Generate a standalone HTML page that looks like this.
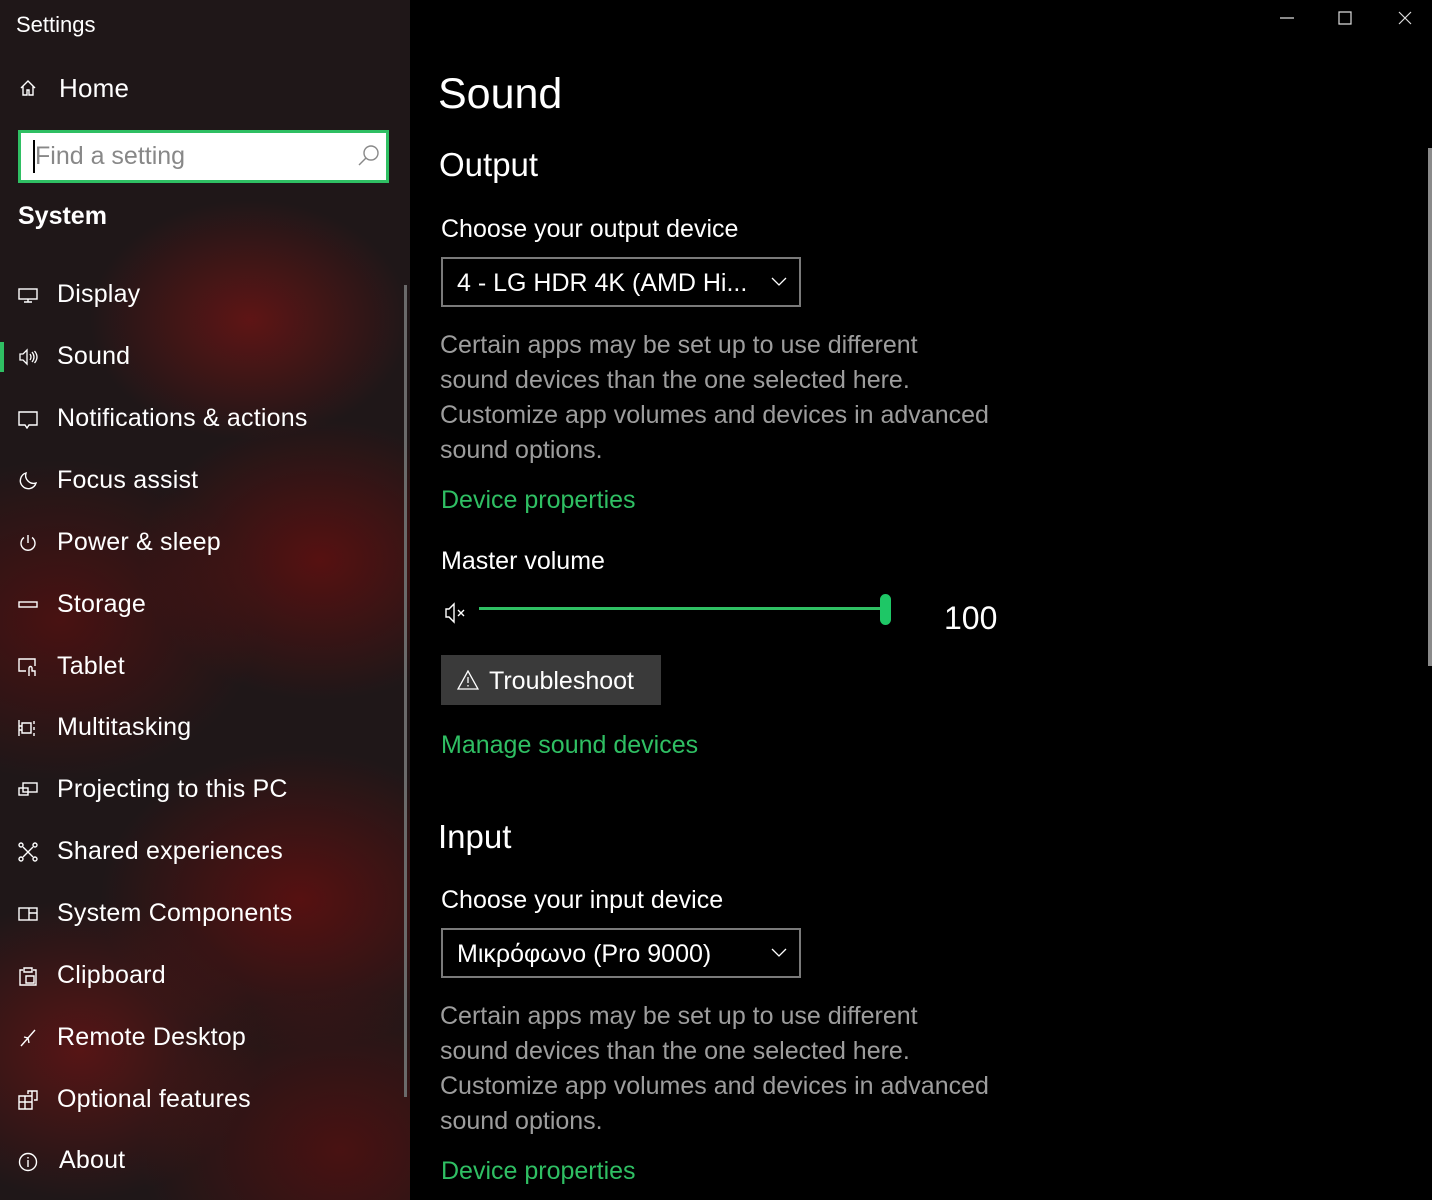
<!DOCTYPE html>
<html><head><meta charset="utf-8"><style>
*{margin:0;padding:0;box-sizing:border-box}
body{width:1432px;height:1200px;background:#000;font-family:"Liberation Sans","DejaVu Sans",sans-serif;color:#fff;position:relative;overflow:hidden}
.side{position:absolute;left:0;top:0;width:410px;height:1200px;background:
radial-gradient(ellipse 160px 120px at 250px 320px,rgba(110,20,20,.8),transparent),
radial-gradient(ellipse 180px 140px at 320px 560px,rgba(100,15,15,.8),transparent),
radial-gradient(ellipse 200px 160px at 60px 620px,rgba(90,15,15,.7),transparent),
radial-gradient(ellipse 200px 150px at 300px 900px,rgba(100,15,15,.8),transparent),
radial-gradient(ellipse 180px 150px at 80px 1050px,rgba(110,20,20,.7),transparent),
radial-gradient(ellipse 200px 160px at 340px 1150px,rgba(90,15,15,.7),transparent),
#1f1718}
.t{position:absolute;white-space:nowrap}
.nav{position:absolute;left:57px;font-size:25px;color:#fff;white-space:nowrap;letter-spacing:.2px}
.ic{position:absolute;left:18px;width:20px;height:20px}
.p{position:absolute;left:440px;font-size:25px;color:#9d9d9d;line-height:35px;white-space:nowrap}
.g{position:absolute;left:441px;font-size:25px;color:#2fbf63}
.dd{position:absolute;left:441px;width:360px;height:50px;border:2px solid #7a7a7a;font-size:25px;padding:10px 14px}
</style></head><body>
<div class="side">
<div class="t" style="left:16px;top:12px;font-size:22px">Settings</div>
<svg class="ic" style="top:78px" viewBox="0 0 20 20" fill="none" stroke="#fff" stroke-width="1.4"><path d="M3 10L10 3l7 7M5 8v9h4v-5h2v5h4V8"/></svg>
<div class="nav" style="left:59px;top:73px;font-size:26px">Home</div>
<div style="position:absolute;left:18px;top:130px;width:371px;height:53px;border:3px solid #2fbf63;background:#fff"></div>
<div class="t" style="left:35px;top:142px;font-size:25px;color:#888">Find a setting</div>
<div style="position:absolute;left:33px;top:140px;width:2px;height:33px;background:#000"></div>
<svg style="position:absolute;left:356px;top:143px" width="26" height="26" viewBox="0 0 26 26" fill="none" stroke="#888" stroke-width="1.4"><circle cx="15" cy="10" r="7"/><path d="M10 15L3 22"/></svg>
<div class="t" style="left:18px;top:202px;font-size:25px;font-weight:bold">System</div>
<div style="position:absolute;left:0;top:342px;width:4px;height:30px;background:#2fbf63"></div>
<div style="position:absolute;left:404px;top:285px;width:3px;height:812px;background:#6a6a6a"></div>
<svg class="ic" style="top:285px" viewBox="0 0 20 20" fill="none" stroke="#fff" stroke-width="1.4"><rect x="1" y="4" width="18" height="10"/><path d="M10 14v3M6 17h8"/></svg>
<div class="nav" style="top:280px">Display</div>
<svg class="ic" style="top:347px" viewBox="0 0 20 20" fill="none" stroke="#fff" stroke-width="1.3"><path d="M2 7h3l4-4v14l-4-4H2zM12 7q2 3 0 6M14 5q4 5 0 10M16.5 4q5 6 0 12"/></svg>
<div class="nav" style="top:342px">Sound</div>
<svg class="ic" style="top:409px" viewBox="0 0 20 20" fill="none" stroke="#fff" stroke-width="1.4"><path d="M1 3h18v13h-8l-2 3-2-3H1z"/></svg>
<div class="nav" style="top:404px">Notifications &amp; actions</div>
<svg class="ic" style="top:471px" viewBox="0 0 20 20" fill="none" stroke="#fff" stroke-width="1.4"><path d="M8 2a8 8 0 1 0 10 10A8 8 0 0 1 8 2z"/></svg>
<div class="nav" style="top:466px">Focus assist</div>
<svg class="ic" style="top:533px" viewBox="0 0 20 20" fill="none" stroke="#fff" stroke-width="1.4"><path d="M10 2v8M6 4.5a7 7 0 1 0 8 0"/></svg>
<div class="nav" style="top:528px">Power &amp; sleep</div>
<svg class="ic" style="top:595px" viewBox="0 0 20 20" fill="none" stroke="#fff" stroke-width="1.4"><rect x="1" y="7" width="18" height="5"/></svg>
<div class="nav" style="top:590px">Storage</div>
<svg class="ic" style="top:657px" viewBox="0 0 20 20" fill="none" stroke="#fff" stroke-width="1.4"><path d="M8 14H1V2h16v7M11 19v-8a1.5 1.5 0 0 1 3 0v3h3v5"/></svg>
<div class="nav" style="top:652px">Tablet</div>
<svg class="ic" style="top:718px" viewBox="0 0 20 20" fill="none" stroke="#fff" stroke-width="1.4"><path d="M1 2v16M4 5h9v10H4zM16 3v3M16 9v3M16 15v3M1 8h3M1 12h3"/></svg>
<div class="nav" style="top:713px">Multitasking</div>
<svg class="ic" style="top:780px" viewBox="0 0 20 20" fill="none" stroke="#fff" stroke-width="1.4"><rect x="5" y="3" width="14" height="9"/><rect x="1" y="8" width="9" height="7"/></svg>
<div class="nav" style="top:775px">Projecting to this PC</div>
<svg class="ic" style="top:842px" viewBox="0 0 20 20" fill="none" stroke="#fff" stroke-width="1.4"><circle cx="3" cy="3" r="2"/><circle cx="17" cy="3" r="2"/><circle cx="3" cy="17" r="2"/><circle cx="17" cy="17" r="2"/><path d="M5 5l10 10M15 5L5 15"/></svg>
<div class="nav" style="top:837px">Shared experiences</div>
<svg class="ic" style="top:904px" viewBox="0 0 20 20" fill="none" stroke="#fff" stroke-width="1.4"><rect x="1" y="4" width="18" height="12"/><path d="M11 4v12M11 9h8"/></svg>
<div class="nav" style="top:899px">System Components</div>
<svg class="ic" style="top:966px" viewBox="0 0 20 20" fill="none" stroke="#fff" stroke-width="1.4"><path d="M5 4H2v15h16V4h-3M6 2h8v4H6zM8 10h8v7H8z"/></svg>
<div class="nav" style="top:961px">Clipboard</div>
<svg class="ic" style="top:1028px" viewBox="0 0 20 20" fill="none" stroke="#fff" stroke-width="1.4"><path d="M17 2L10 10M3 18l7-8M6 9l4 1M11 15l-1-5"/></svg>
<div class="nav" style="top:1023px">Remote Desktop</div>
<svg class="ic" style="top:1090px" viewBox="0 0 20 20" fill="none" stroke="#fff" stroke-width="1.4"><path d="M1 6h13v13H1zM1 12h13M7 6v13M10 4V1h9v9h-3M14 1v9"/></svg>
<div class="nav" style="top:1085px">Optional features</div>
<svg class="ic" style="top:1152px" viewBox="0 0 20 20" fill="none" stroke="#fff" stroke-width="1.4"><circle cx="10" cy="10" r="8.5"/><path d="M10 8v7M10 5v1.5"/></svg>
<div class="nav" style="top:1146px;left:59px">About</div>
</div>
<svg style="position:absolute;left:1278px;top:10px" width="140" height="16" fill="none" stroke="#ddd" stroke-width="1.2"><path d="M2 8h14M61 2h12v12H61zM121 2l12 12M133 2l-12 12"/></svg>
<div style="position:absolute;left:1428px;top:148px;width:4px;height:518px;background:#8a8a8a"></div>
<div class="t" style="left:438px;top:70px;font-size:43px">Sound</div>
<div class="t" style="left:439px;top:146px;font-size:33px">Output</div>
<div class="t" style="left:441px;top:215px;font-size:25px">Choose your output device</div>
<div class="dd" style="top:257px">4 - LG HDR 4K (AMD Hi...<svg style="position:absolute;right:12px;top:18px" width="16" height="10" fill="none" stroke="#fff" stroke-width="1.3"><path d="M1 1l7 7 7-7"/></svg></div>
<div class="p" style="top:328px">Certain apps may be set up to use different<br>sound devices than the one selected here.<br>Customize app volumes and devices in advanced<br>sound options.</div>
<div class="g" style="top:486px">Device properties</div>
<div class="t" style="left:441px;top:547px;font-size:25px">Master volume</div>
<svg style="position:absolute;left:444px;top:602px" width="28" height="22" fill="none" stroke="#fff" stroke-width="1.4"><path d="M2 7h3l5-5v18l-5-5H2zM14 8l6 6M20 8l-6 6"/></svg>
<div style="position:absolute;left:479px;top:607px;width:404px;height:3px;background:#2fbf63"></div>
<div style="position:absolute;left:880px;top:594px;width:11px;height:31px;border-radius:6px;background:#1ec766"></div>
<div class="t" style="left:944px;top:600px;font-size:32px">100</div>
<div style="position:absolute;left:441px;top:655px;width:220px;height:50px;background:#3a3a3a"></div>
<svg style="position:absolute;left:457px;top:670px" width="22" height="20" fill="none" stroke="#fff" stroke-width="1.3"><path d="M11 1L1 19h20zM11 7v6M11 15v1.5"/></svg>
<div class="t" style="left:489px;top:667px;font-size:25px">Troubleshoot</div>
<div class="g" style="top:731px">Manage sound devices</div>
<div class="t" style="left:438px;top:818px;font-size:33px">Input</div>
<div class="t" style="left:441px;top:886px;font-size:25px">Choose your input device</div>
<div class="dd" style="top:928px">Μικρόφωνο (Pro 9000)<svg style="position:absolute;right:12px;top:18px" width="16" height="10" fill="none" stroke="#fff" stroke-width="1.3"><path d="M1 1l7 7 7-7"/></svg></div>
<div class="p" style="top:999px">Certain apps may be set up to use different<br>sound devices than the one selected here.<br>Customize app volumes and devices in advanced<br>sound options.</div>
<div class="g" style="top:1157px">Device properties</div>
</body></html>
